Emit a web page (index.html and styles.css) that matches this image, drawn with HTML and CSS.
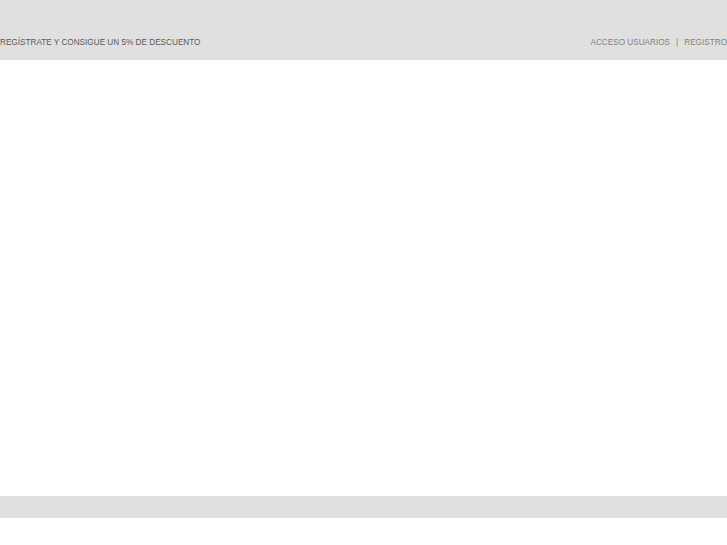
FILE: index.html
```html
<!DOCTYPE html>
<html lang="es">
<head>
<meta charset="utf-8">
<title>Registro</title>
<link rel="stylesheet" href="styles.css">
</head>
<body>
<header class="topbar">
  <div class="promo">REGÍSTRATE Y CONSIGUE UN 5% DE DESCUENTO</div>
  <nav class="user-links">
    <a href="#">ACCESO USUARIOS</a>
    <span class="sep">|</span>
    <a href="#">REGISTRO</a>
  </nav>
</header>
<main class="content"></main>
<footer class="footbar"></footer>
</body>
</html>
```
FILE: styles.css
```css
html, body {
  margin: 0;
  padding: 0;
  background: #ffffff;
  font-family: "Liberation Sans", Arial, sans-serif;
}
.topbar {
  height: 60px;
  background: #e0e0e0;
  display: flex;
  justify-content: space-between;
  align-items: flex-start;
  padding-top: 37px;
  box-sizing: border-box;
  font-size: 8.2px;
  line-height: 11px;
}
.promo {
  color: #5a5a5a;
}
.user-links {
  display: flex;
  gap: 6px;
  color: #808080;
}
.user-links a {
  color: #808080;
  text-decoration: none;
}
.content {
  height: 436px;
}
.footbar {
  height: 22px;
  background: #e0e0e0;
}
```
